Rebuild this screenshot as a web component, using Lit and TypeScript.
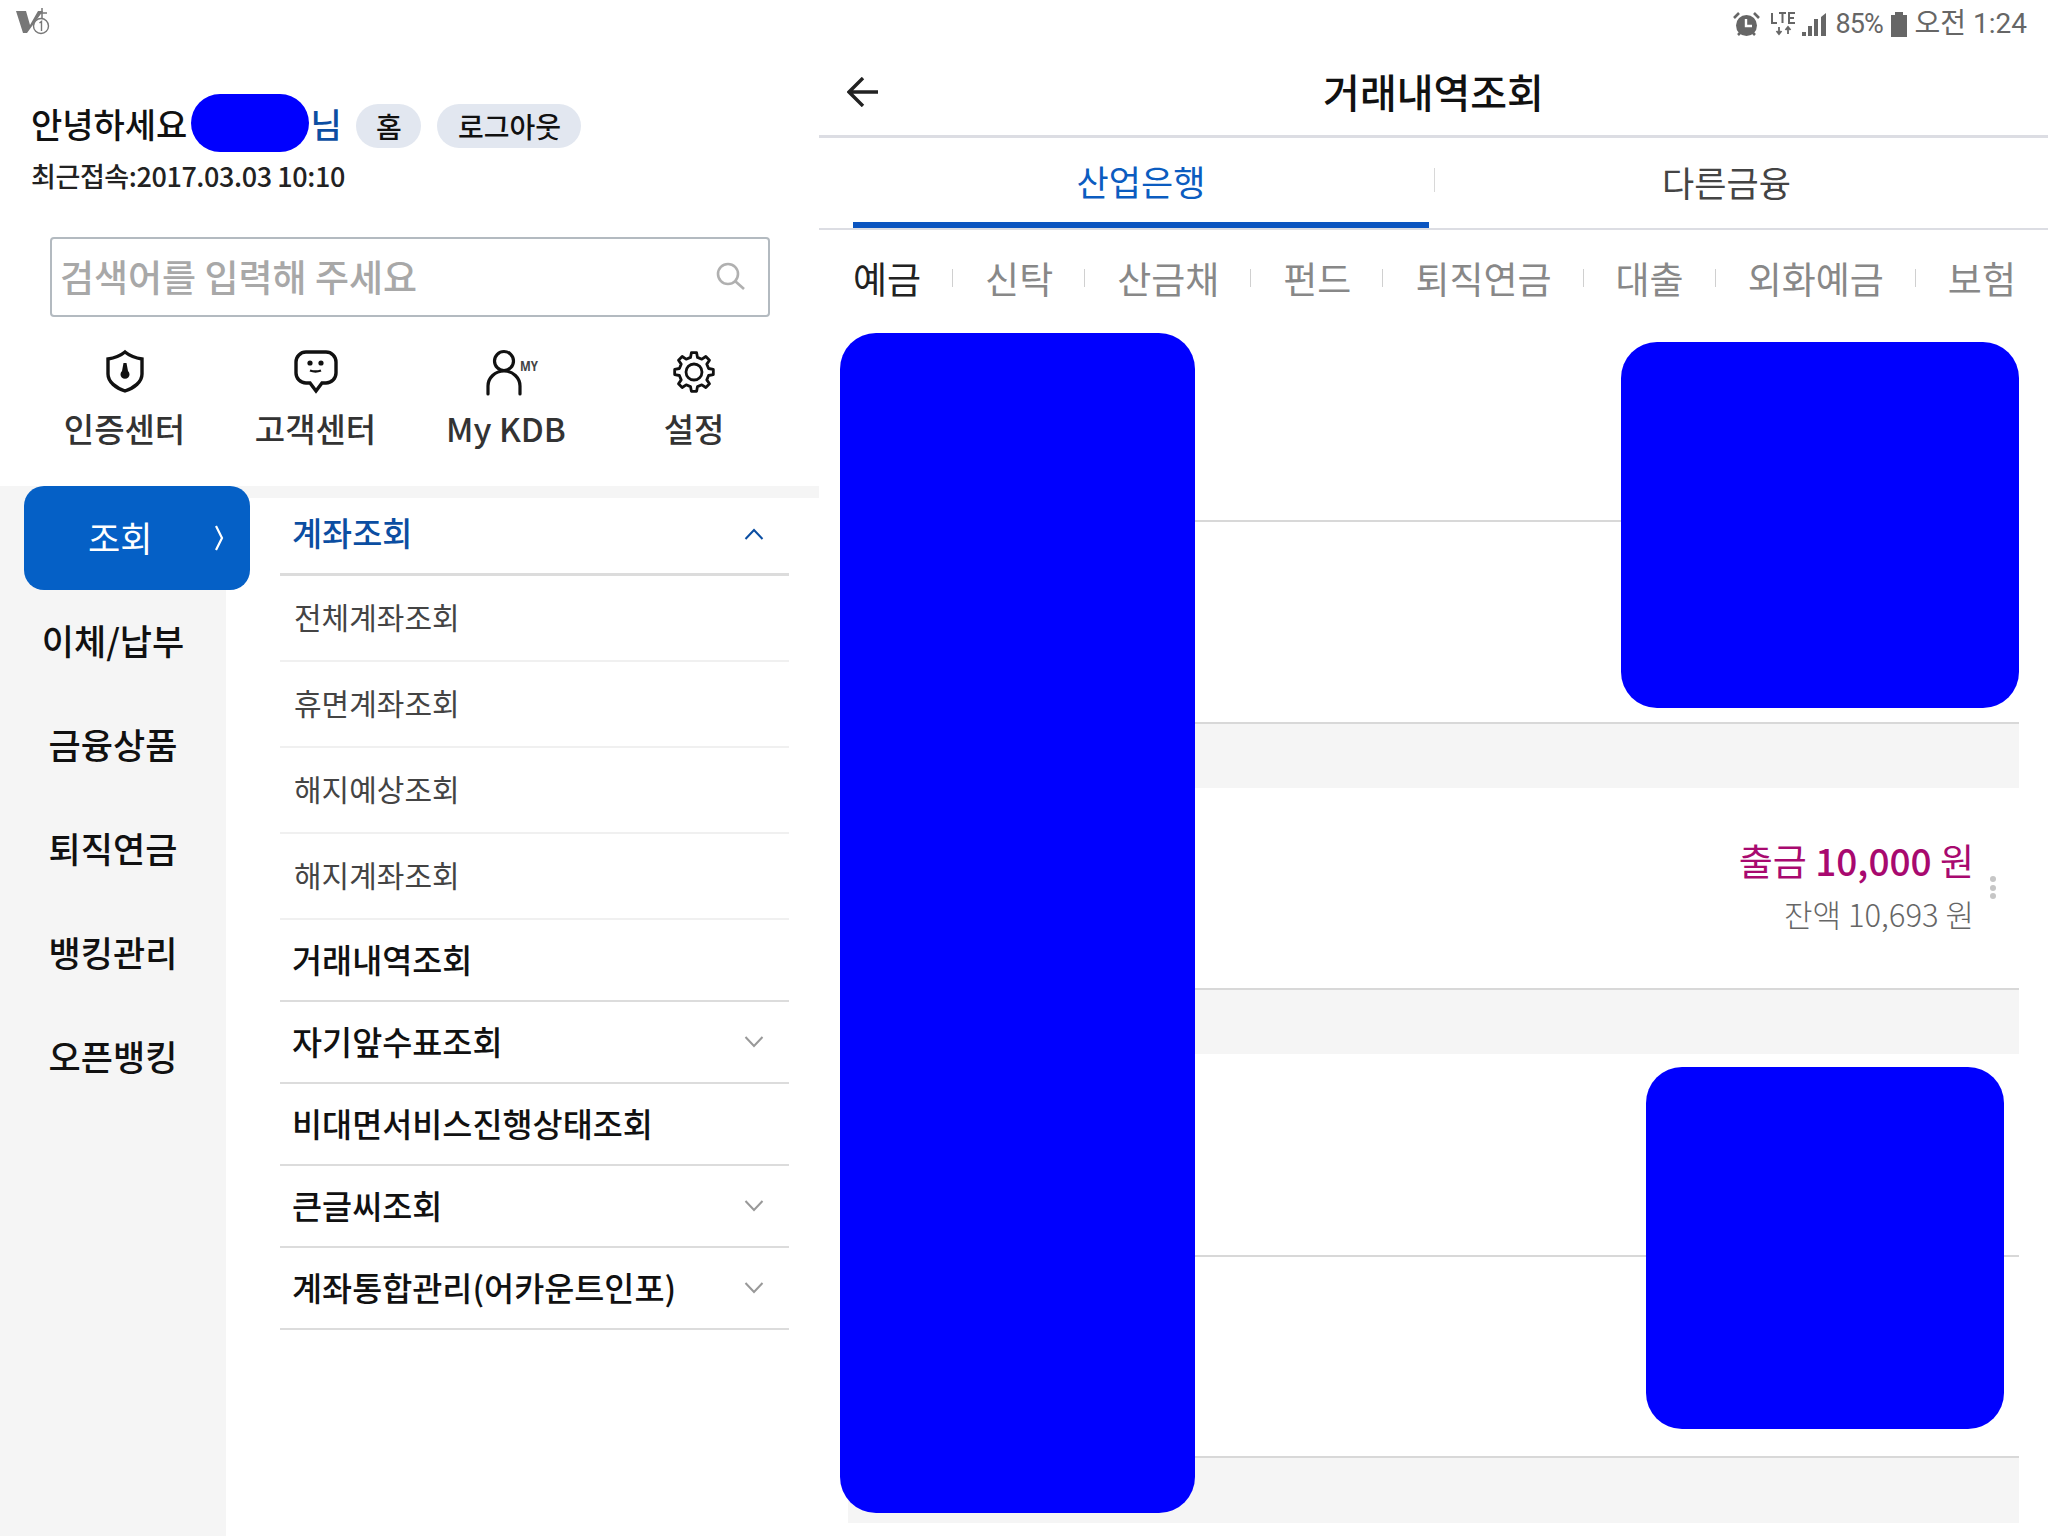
import { LitElement, html, css } from "lit";
import { customElement } from "lit/decorators.js";

const SUB = ["전체계좌조회", "휴면계좌조회", "해지예상조회", "해지계좌조회"];
const MENU: [string, boolean][] = [
  ["거래내역조회", false],
  ["자기앞수표조회", true],
  ["비대면서비스진행상태조회", false],
  ["큰글씨조회", true],
  ["계좌통합관리(어카운트인포)", true],
];
const RAIL = ["이체/납부", "금융상품", "퇴직연금", "뱅킹관리", "오픈뱅킹"];
const KINDS = ["예금", "신탁", "산금채", "펀드", "퇴직연금", "대출", "외화예금", "보험"];

const chevron = (up: boolean, color: string) =>
  html`<svg class="chev" viewBox="0 0 20 12" fill="none" stroke=${color} stroke-width="2"><path d=${up ? "M1.500 11 10 2l8.500 9" : "M1.500 1l8.500 9 8.500-9"}/></svg>`;

function gearPath(cx: number, cy: number, ro: number, ri: number, teeth: number) {
  const pts: string[] = [];
  const step = (Math.PI * 2) / teeth;
  for (let i = 0; i < teeth; i++) {
    const a = i * step - Math.PI / 2;
    const offs: [number, number][] = [
      [-0.3, ri],
      [-0.17, ro],
      [0.17, ro],
      [0.3, ri],
    ];
    for (const [o, r] of offs) {
      const t = a + o * step;
      pts.push(`${(cx + r * Math.cos(t)).toFixed(2)} ${(cy + r * Math.sin(t)).toFixed(2)}`);
    }
  }
  return "M" + pts.join("L") + "Z";
}

@customElement("app-root")
export class AppRoot extends LitElement {
  static styles = css`
    :host { display: block; width: 2048px; height: 1536px; position: relative; overflow: hidden; background: #fff;
      font-family: "Noto Sans CJK KR", "Noto Sans", sans-serif; color: #111; }
    .status { height: 46px; display: flex; align-items: center; justify-content: space-between; padding: 0 21px 0 15px; color: #666; }
    .v-icon { width: 36px; height: 28px; margin-top: -2px; }
    .status-r { display: flex; align-items: center; font-size: 28px; font-family: Roboto, "Noto Sans CJK KR", sans-serif; line-height: 46px; margin-top: 2px; }
    .alarm { margin-right: 11px; }
    .lte { margin-right: 6px; }
    .signal { margin-right: 10px; }
    .batt { margin: 0 8px 0 4px; }
    .pct { width: 51px; font-size: 27px; letter-spacing: -1px; }
    .main { display: flex; height: 1490px; }
    .left { width: 819px; display: flex; flex-direction: column; }
    .right { flex: 1; position: relative; display: flex; flex-direction: column; }
    .greet { display: flex; align-items: center; height: 44px; margin-top: 58px; padding-left: 31px; font-size: 34px; font-weight: 500; }
    .hello { margin-bottom: 6px; }
    .name-gap { width: 123px; flex: none; }
    .nim { color: #0b4ea2; width: 46px; margin-bottom: 6px; }
    .pill { height: 44px; border-radius: 22px; background: #e2e7f0; font-size: 28px; font-weight: 500; display: flex; align-items: center; justify-content: center; color: #111; }
    .pill.a { width: 65px; margin-right: 16px; }
    .pill.b { width: 144px; }
    .last { padding-left: 31px; font-size: 27px; font-weight: 500; line-height: 40px; margin-top: 8px; color: #222; letter-spacing: -0.4px; }
    .search { margin: 41px 0 0 50px; width: 720px; height: 80px; box-sizing: border-box; border: 2px solid #b3bac0; border-radius: 4px; display: flex; align-items: center; justify-content: space-between; padding: 0 22px 2px 8px; font-size: 37px; font-weight: 500; color: #a8a8a8; }
    .shortcuts { display: grid; grid-template-columns: 191px 191px 190px 186px; margin: 32px 0 0 29px; height: 135px; }
    .sc { display: flex; flex-direction: column; align-items: center; }
    .sc svg { width: 60px; height: 46px; display: block; overflow: visible; }
    .sc span { font-size: 33px; font-weight: 500; line-height: 48px; margin-top: 9px; color: #333; white-space: nowrap; }
    .body { flex: 1; display: flex; position: relative; border-top: 12px solid #f5f5f5; margin-top: 2px; }
    .rail { width: 226px; background: #f5f5f5; padding-top: 89px; box-sizing: border-box; }
    .rail div { height: 104px; display: flex; align-items: center; justify-content: center; width: 226px; font-size: 35px; font-weight: 500; }
    .active { position: absolute; left: 24px; top: -12px; width: 226px; height: 104px; border-radius: 20px; background: #0560c6; color: #fff; font-size: 35px; display: flex; align-items: center; padding: 0 0 4px 64px; box-sizing: border-box; }
    .active svg { position: absolute; left: 189px; top: 39px; width: 12px; height: 26px; }
    .menu { margin-left: 54px; width: 509px; }
    .mrow { display: flex; align-items: center; justify-content: space-between; height: 76px; border-bottom: 2px solid #dcdcdc; padding: 0 25px 4px 12px; font-size: 32.7px; font-weight: 500; white-space: nowrap; }
    .mrow.head { height: 67px; padding-bottom: 8px; color: #0b4ea2; border-bottom-width: 3px; }
    .srow { height: 80px; border-bottom: 2px solid #f0f0f0; padding: 0 0 4px 14px; font-size: 30px; color: #444; display: flex; align-items: center; }
    .chev { width: 20px; height: 12px; margin-top: 4px; }
    .topbar { height: 89px; border-bottom: 3px solid #dcdde3; display: flex; align-items: center; justify-content: center; font-size: 40px; font-weight: 500; position: relative; }
    .back { position: absolute; left: 28px; top: 31px; width: 31px; height: 30px; }
    .tabs { height: 90px; border-bottom: 2px solid #dcdde3; display: grid; grid-template-columns: 610px 1fr; font-size: 35px; }
    .tab { display: flex; align-items: center; justify-content: center; color: #444; }
    .tab.on { color: #0b5cc0; margin-left: 34px; width: 576px; border-bottom: 6px solid #0b55c0; box-sizing: border-box; }
    .tab.other { position: relative; padding: 0 24px 4px 0; }
    .tab.other::before { content: ""; position: absolute; left: 5px; top: 30px; width: 1px; height: 24px; background: #d8d8d8; }
    .kinds { display: flex; align-items: center; height: 96px; padding: 0 0 9px 34px; font-size: 37px; color: #888; white-space: nowrap; }
    .kinds i { width: 1px; height: 18px; background: #d0d0d0; margin: 0 32px 0 31px; flex: none; }
    .kinds span.on { color: #222; }
    .list { margin-left: 29px; width: 1171px; }
    .row { position: relative; background: #fff; box-sizing: border-box; }
    .sep { border-bottom: 2px solid #d8d8d8; }
    .band { background: #f5f5f5; height: 64px; }
    .band.last-band { height: 65px; }
    .amount { position: absolute; right: 45px; text-align: right; white-space: nowrap; }
    .out { top: 45px; font-size: 37px; color: #a8096f; line-height: 54px; }
    .out b { font-weight: 500; }
    .bal { top: 104px; font-size: 31px; color: #666; font-weight: 300; line-height: 44px; }
    .dots { position: absolute; right: 23px; top: 88px; display: flex; flex-direction: column; gap: 2.5px; }
    .dots i { width: 6px; height: 6px; border-radius: 50%; background: #c6c6c6; display: block; }
    .blob { position: absolute; background: #0000ff; border-radius: 36px; }
    .blob.b1 { left: 21px; top: 287px; width: 355px; height: 1180px; }
    .blob.b2 { left: 802px; top: 296px; width: 398px; height: 366px; }
    .blob.b3 { left: 827px; top: 1021px; width: 358px; height: 362px; }
    .blob.name { left: 191px; top: 94px; width: 118px; height: 58px; border-radius: 29px; }
    .r1 { height: 187px; }
    .r2 { height: 202px; }
    .r3 { height: 202px; }
    .r4 { height: 203px; }
    .r5 { height: 201px; }
  `;

  render() {
    return html`
      <div class="status">
        <svg class="v-icon" viewBox="0 0 36 28" fill="none">
          <path d="M1 3h10l4 14L23 3h5L12 25H8z" fill="#777"/>
          <path d="M27 0v10M23 5h9" stroke="#777" stroke-width="1.500"/>
          <circle cx="26" cy="18" r="7.500" fill="#fff" stroke="#777" stroke-width="1.400"/>
          <path d="M24.500 15l2-1.500V23" stroke="#777" stroke-width="1.400"/>
        </svg>
        <div class="status-r">
          <svg class="alarm" width="27" height="25" viewBox="0 0 27 25"><circle cx="13.500" cy="13.500" r="10.500" fill="#666"/><path d="M13 7v7h6" stroke="#fff" stroke-width="2.400" fill="none"/><path d="M1 6l5-5M26 6l-5-5M5 23l3-3M22 23l-3-3" stroke="#666" stroke-width="2.600"/></svg>
          <svg class="lte" width="25" height="26" viewBox="0 0 25 26"><path d="M1 2v10h5M8 2h7M11.500 2v10M24 2h-6v10h6M18 7h5" stroke="#666" stroke-width="2" fill="none"/><path d="M8 16v7M5.500 20l2.500 3 2.500-3M17 23v-7M14.500 19l2.500-3 2.500 3" stroke="#666" stroke-width="1.800" fill="none"/></svg>
          <svg class="signal" width="24" height="24" viewBox="0 0 24 24"><path d="M0 24h4v-4H0zM6 24h4V14H6zM12 24h4V7h-4zM19 24h5V1l-5 4z" fill="#666"/></svg>
          <span class="pct">85%</span>
          <svg class="batt" width="16" height="25" viewBox="0 0 16 25"><path d="M4 0h8v3h4v22H0V3h4z" fill="#666"/></svg>
          <span>오전 1:24</span>
        </div>
      </div>
      <div class="main">
        <div class="left">
          <div class="greet">
            <span class="hello">안녕하세요</span><span class="name-gap"></span><span class="nim">님</span>
            <span class="pill a">홈</span><span class="pill b">로그아웃</span>
          </div>
          <div class="last">최근접속:2017.03.03 10:10</div>
          <div class="search">
            <span>검색어를 입력해 주세요</span>
            <svg width="30" height="28" viewBox="0 0 30 28" fill="none" stroke="#b0b0b0" stroke-width="2.600"><circle cx="12" cy="12" r="10"/><path d="M19 19l9 8"/></svg>
          </div>
          <div class="shortcuts">
            <div class="sc">
              <svg viewBox="0 0 60 46" fill="none" stroke="#111" stroke-width="3.400"><path d="M30 3c5 4 10 6 17 7v15c0 8-8 14-17 17-9-3-17-9-17-17V10c7-1 12-3 17-7z"/><path d="M28.500 14h3l1.500 8a4.500 4.500 0 1 1-6 0z" fill="#111" stroke="none"/></svg>
              <span>인증센터</span>
            </div>
            <div class="sc">
              <svg viewBox="0 0 60 46" fill="none" stroke="#111" stroke-width="3.400"><path d="M20 3h20a10 10 0 0 1 10 10v11a10 10 0 0 1-10 10h-4l-6 8-6-8h-4a10 10 0 0 1-10-10V13A10 10 0 0 1 20 3z"/><circle cx="24" cy="14" r="2.600" fill="#111" stroke="none"/><circle cx="35" cy="14" r="2.600" fill="#111" stroke="none"/><path d="M24 21.500c4 1.500 7 1.500 11 0" stroke-width="2.400"/></svg>
              <span>고객센터</span>
            </div>
            <div class="sc">
              <svg viewBox="0 0 60 46" fill="none" stroke="#111" stroke-width="3.200"><circle cx="28" cy="12" r="9.500"/><path d="M12 45v-8c0-8 7-15 16-15s16 7 16 15v8" stroke-linecap="round"/><text x="44" y="22" font-size="14" font-weight="700" fill="#444" stroke="none" font-family="Noto Sans" textLength="18" lengthAdjust="spacingAndGlyphs">MY</text></svg>
              <span>My KDB</span>
            </div>
            <div class="sc">
              <svg viewBox="0 0 60 46" fill="none" stroke="#111" stroke-width="2.800" stroke-linejoin="round"><path d=${gearPath(30, 23, 19.5, 15, 8)}/><circle cx="30" cy="23" r="8"/></svg>
              <span>설정</span>
            </div>
          </div>
          <div class="body">
            <div class="rail">${RAIL.map((r) => html`<div>${r}</div>`)}</div>
            <div class="active">조회
              <svg viewBox="0 0 12 26" fill="none" stroke="#fff" stroke-width="2.200"><path d="M3 1l6 12-6 12"/></svg>
            </div>
            <div class="menu">
              <div class="mrow head">계좌조회 ${chevron(true, "#0b4ea2")}</div>
              ${SUB.map((s) => html`<div class="srow">${s}</div>`)}
              ${MENU.map(([m, c]) => html`<div class="mrow">${m} ${c ? chevron(false, "#999") : ""}</div>`)}
            </div>
          </div>
        </div>
        <div class="right">
          <div class="topbar">
            <svg class="back" viewBox="0 0 31 30" fill="none" stroke="#222" stroke-width="3.400"><path d="M31 15H3M16 1L2 15l14 14"/></svg>
            거래내역조회
          </div>
          <div class="tabs">
            <div class="tab on">산업은행</div>
            <div class="tab other">다른금융</div>
          </div>
          <div class="kinds">
            ${KINDS.map((k, i) => html`${i ? html`<i></i>` : ""}<span class=${i === 0 ? "on" : ""}>${k}</span>`)}
          </div>
          <div class="list">
            <div class="row sep r1"></div>
            <div class="row sep r2"></div>
            <div class="band"></div>
            <div class="row sep r3">
              <div class="amount out">출금 <b>10,000</b> 원</div>
              <div class="amount bal">잔액 10,693 원</div>
              <div class="dots"><i></i><i></i><i></i></div>
            </div>
            <div class="band"></div>
            <div class="row sep r4"></div>
            <div class="row sep r5"></div>
            <div class="band last-band"></div>
          </div>
          <div class="blob b1"></div>
          <div class="blob b2"></div>
          <div class="blob b3"></div>
        </div>
      </div>
      <div class="blob name"></div>
    `;
  }
}
